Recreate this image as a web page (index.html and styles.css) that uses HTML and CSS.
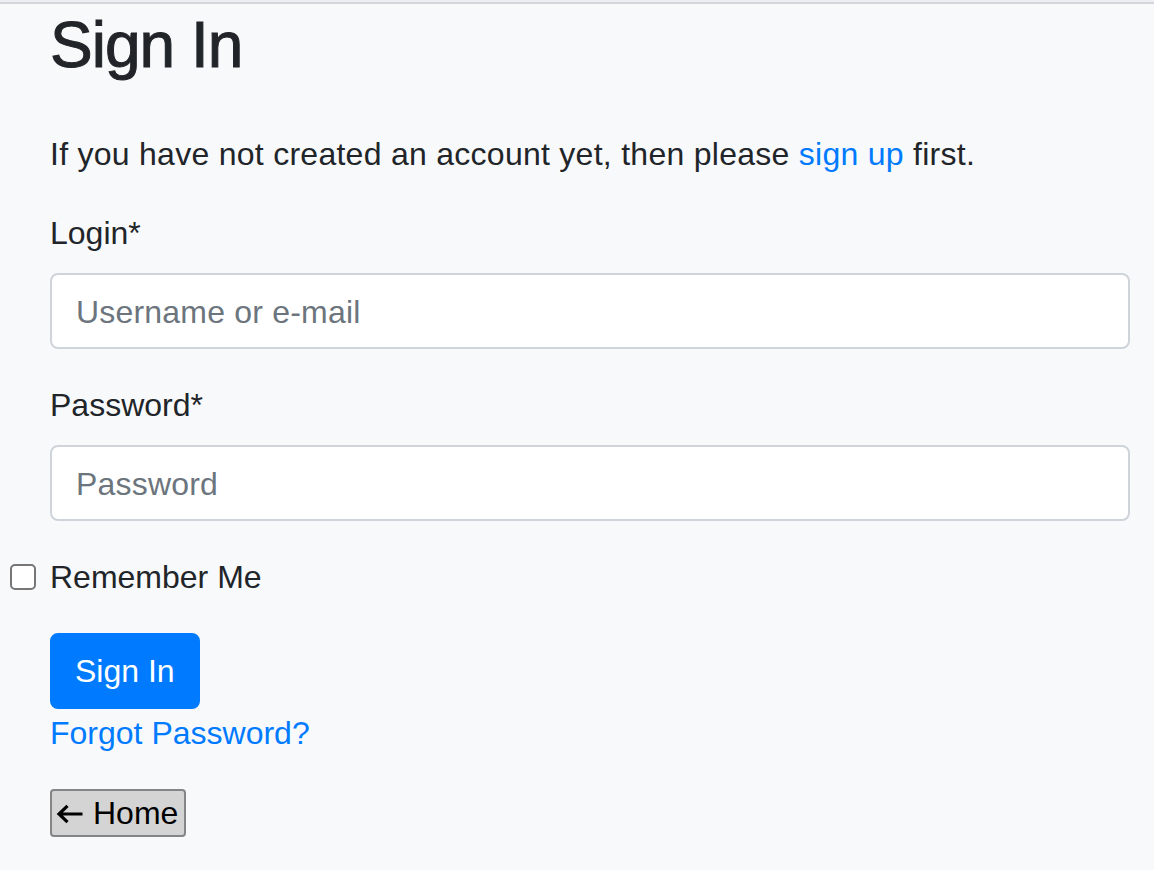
FILE: index.html
```html
<!DOCTYPE html>
<html lang="en">
<head>
<meta charset="utf-8">
<title>Sign In</title>
<link rel="stylesheet" href="styles.css">
</head>
<body>
<div class="topline">
  <main class="page">
    <h2 class="title">Sign In</h2>
    <p class="intro">If you have not created an account yet, then please <a class="link" href="#">sign up</a> first.</p>
    <form class="form">
      <div class="group">
        <label class="label" for="login">Login*</label>
        <input class="field" id="login" type="text" placeholder="Username or e-mail">
      </div>
      <div class="group">
        <label class="label" for="password">Password*</label>
        <input class="field" id="password" type="password" placeholder="Password">
      </div>
      <div class="group check">
        <input class="checkbox" id="remember" type="checkbox">
        <label class="check-label" for="remember">Remember Me</label>
      </div>
      <button class="btn-primary" type="button">Sign In</button>
      <a class="link forgot" href="#">Forgot Password?</a>
    </form>
    <button class="home-btn" type="button"><svg class="arrow" width="27" height="20" viewBox="0 0 27 20" aria-hidden="true"><path d="M26.5 10H3M11.5 1.8L3 10l8.5 8.2" fill="none" stroke="#000" stroke-width="3.2" stroke-linejoin="miter" stroke-linecap="butt"/></svg>Home</button>
  </main>
</div>
</body>
</html>
```

FILE: styles.css
```css
html, body {
  margin: 0;
  padding: 0;
  background: #f8f9fa;
}

body {
  font-family: "Liberation Sans", Arial, Helvetica, sans-serif;
  font-size: 32px;
  line-height: 48px;
  color: #212529;
  border-top: 2px solid #eceef1;
}

.topline {
  border-top: 2px solid #d3d6db;
}

.page {
  padding: 0 24px 32px 50px;
}

.title {
  font-size: 64px;
  font-weight: 500;
  line-height: 1.2;
  letter-spacing: -1px;
  -webkit-text-stroke: 1px #212529;
  margin: 3px 0 46px;
  color: #212529;
}

.intro {
  margin: 0 0 31px;
  letter-spacing: 0.27px;
}

.link {
  color: #007bff;
  text-decoration: none;
}

.form {
  display: flex;
  flex-direction: column;
  align-items: flex-start;
}

.group {
  display: flex;
  flex-direction: column;
  align-self: stretch;
  margin-bottom: 32px;
}

.label {
  display: block;
  margin-bottom: 16px;
}

.field {
  display: block;
  box-sizing: border-box;
  width: 100%;
  height: 76px;
  padding: 14px 24px 10px;
  font-family: inherit;
  font-size: 32px;
  line-height: 48px;
  letter-spacing: 0.2px;
  color: #495057;
  background: #fff;
  border: 2px solid #ced4da;
  border-radius: 8px;
  outline: none;
}

.field::placeholder {
  color: #6c757d;
  opacity: 1;
}

.check {
  flex-direction: row;
  align-items: center;
  margin-left: -40px;
}

.checkbox {
  -webkit-appearance: none;
  appearance: none;
  box-sizing: border-box;
  width: 26px;
  height: 26px;
  margin: 0 14px 0 0;
  background: #fff;
  border: 2px solid #767676;
  border-radius: 5px;
}

.check-label {
  line-height: 48px;
}

.btn-primary {
  font-family: inherit;
  font-size: 32px;
  line-height: 48px;
  padding: 12px 23px;
  height: 76px;
  box-sizing: border-box;
  color: #fff;
  background: #007bff;
  border: 2px solid #007bff;
  border-radius: 8px;
}

.forgot {
  display: block;
  line-height: 48px;
}

.home-btn {
  margin-top: 32px;
  font-family: inherit;
  font-size: 32px;
  line-height: 38px;
  padding: 3px 6px 3px 4px;
  color: #000;
  background: #d4d4d4;
  border: 2px solid #858585;
  border-radius: 4px;
}

.arrow {
  display: inline-block;
  vertical-align: 0;
  margin-right: 10px;
}
```
